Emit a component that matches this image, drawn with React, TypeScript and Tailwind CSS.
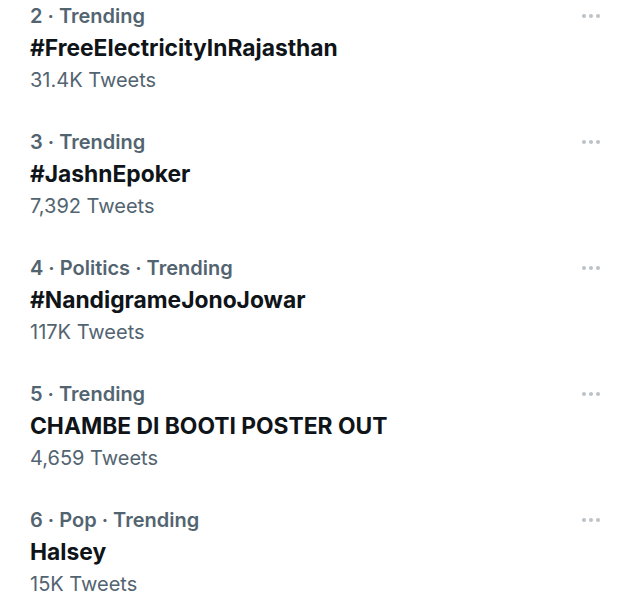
const trends = [
  { meta: "2 · Trending", title: "#FreeElectricityInRajasthan", count: "31.4K Tweets" },
  { meta: "3 · Trending", title: "#JashnEpoker", count: "7,392 Tweets" },
  { meta: "4 · Politics · Trending", title: "#NandigrameJonoJowar", count: "117K Tweets" },
  { meta: "5 · Trending", title: "CHAMBE DI BOOTI POSTER OUT", count: "4,659 Tweets" },
  { meta: "6 · Pop · Trending", title: "Halsey", count: "15K Tweets" },
];

function MoreDots() {
  return (
    <div className="flex h-8 items-center gap-[3px] pr-[21px]">
      <span className="h-[4px] w-[4px] rounded-full bg-[#bcc2c8]" />
      <span className="h-[4px] w-[4px] rounded-full bg-[#bcc2c8]" />
      <span className="h-[4px] w-[4px] rounded-full bg-[#bcc2c8]" />
    </div>
  );
}

export default function App() {
  return (
    <div
      className="h-[600px] w-[621px] overflow-hidden bg-white"
      style={{ fontFamily: "Inter, 'Liberation Sans', sans-serif" }}
    >
      {trends.map((t) => (
        <div key={t.title} className="flex h-[126px] justify-between pl-[30px]">
          <div>
            <div className="text-[20px] leading-[32px] font-semibold text-[#536471]">
              {t.meta}
            </div>
            <div className="text-[22.8px] leading-[32px] font-bold text-[#0f1419]">
              {t.title}
            </div>
            <div className="text-[20px] leading-[32px] text-[#536471]">
              {t.count}
            </div>
          </div>
          <MoreDots />
        </div>
      ))}
    </div>
  );
}
